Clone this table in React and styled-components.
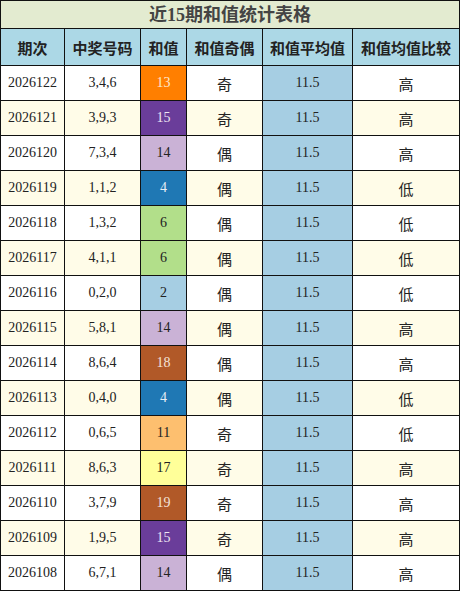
import styled, { createGlobalStyle } from "styled-components";

const GlobalStyle = createGlobalStyle`
    body {
        margin: 0;
        background: #ffffff;
    }
`

const rows = [
    ["2026122", "3,4,6", 13, "奇", "高"],
    ["2026121", "3,9,3", 15, "奇", "高"],
    ["2026120", "7,3,4", 14, "偶", "高"],
    ["2026119", "1,1,2", 4, "偶", "低"],
    ["2026118", "1,3,2", 6, "偶", "低"],
    ["2026117", "4,1,1", 6, "偶", "低"],
    ["2026116", "0,2,0", 2, "偶", "低"],
    ["2026115", "5,8,1", 14, "偶", "高"],
    ["2026114", "8,6,4", 18, "偶", "高"],
    ["2026113", "0,4,0", 4, "偶", "低"],
    ["2026112", "0,6,5", 11, "奇", "低"],
    ["2026111", "8,6,3", 17, "奇", "高"],
    ["2026110", "3,7,9", 19, "奇", "高"],
    ["2026109", "1,9,5", 15, "奇", "高"],
    ["2026108", "6,7,1", 14, "偶", "高"],
]

const sumColors = {
    2: ["#a6cee3", "#222"],
    4: ["#1f78b4", "#e8eef4"],
    6: ["#b2df8a", "#222"],
    11: ["#fdbf6f", "#222"],
    13: ["#ff7f00", "#fde8d0"],
    14: ["#cab2d6", "#222"],
    15: ["#6a3d9a", "#ece6f2"],
    17: ["#ffff99", "#222"],
    18: ["#b15928", "#f4e4da"],
    19: ["#b15928", "#f4e4da"],
}

const App = () => {
    return (
        <>
            <GlobalStyle />
            <Table>
                <colgroup>
                    <col style={{ width: 64 }} />
                    <col style={{ width: 76 }} />
                    <col style={{ width: 46 }} />
                    <col style={{ width: 76 }} />
                    <col style={{ width: 90 }} />
                    <col />
                </colgroup>
                <thead>
                    <tr>
                        <Title colSpan={6}>近15期和值统计表格</Title>
                    </tr>
                    <tr>
                        <Head>期次</Head>
                        <Head>中奖号码</Head>
                        <Head>和值</Head>
                        <Head>和值奇偶</Head>
                        <Head>和值平均值</Head>
                        <Head>和值均值比较</Head>
                    </tr>
                </thead>
                <tbody>
                    {rows.map(([issue, nums, sum, parity, cmp], i) => (
                        <Row key={issue} $alt={i % 2 === 1}>
                            <Cell>{issue}</Cell>
                            <Cell>{nums}</Cell>
                            <SumCell $bg={sumColors[sum][0]} $fg={sumColors[sum][1]}>{sum}</SumCell>
                            <CjkCell>{parity}</CjkCell>
                            <AvgCell>11.5</AvgCell>
                            <CjkCell>{cmp}</CjkCell>
                        </Row>
                    ))}
                </tbody>
            </Table>
        </>
    )
}

const Table = styled.table`
    width: 460px;
    border-collapse: collapse;
    table-layout: fixed;
    font-family: "Liberation Serif", "Noto Sans CJK SC", serif;
    color: #222;
`

const Title = styled.th`
    height: 27px;
    padding: 0;
    background: #e3ebd0;
    border: 1px solid #111;
    font-family: "Liberation Serif", "Noto Sans CJK SC", serif;
    font-size: 18px;
    font-weight: bold;
    color: #444;
    text-align: center;
    line-height: 26px;
`

const Head = styled.th`
    height: 36px;
    padding: 0;
    background: #acd8e6;
    border: 1px solid #111;
    font-family: "Noto Sans CJK SC", sans-serif;
    font-size: 15px;
    font-weight: bold;
    color: #222;
    text-align: center;
`

const Row = styled.tr`
    background: ${(p) => (p.$alt ? "#fffce8" : "#ffffff")};
`

const Cell = styled.td`
    height: 34px;
    padding: 0;
    border: 1px solid #111;
    text-align: center;
    font-size: 14px;
`

const SumCell = styled(Cell)`
    background: ${(p) => p.$bg};
    color: ${(p) => p.$fg};
`

const CjkCell = styled(Cell)`
    font-family: "Noto Sans CJK SC", sans-serif;
    font-size: 15px;
`

const AvgCell = styled(Cell)`
    background: #a6cee3;
`

export default App;
